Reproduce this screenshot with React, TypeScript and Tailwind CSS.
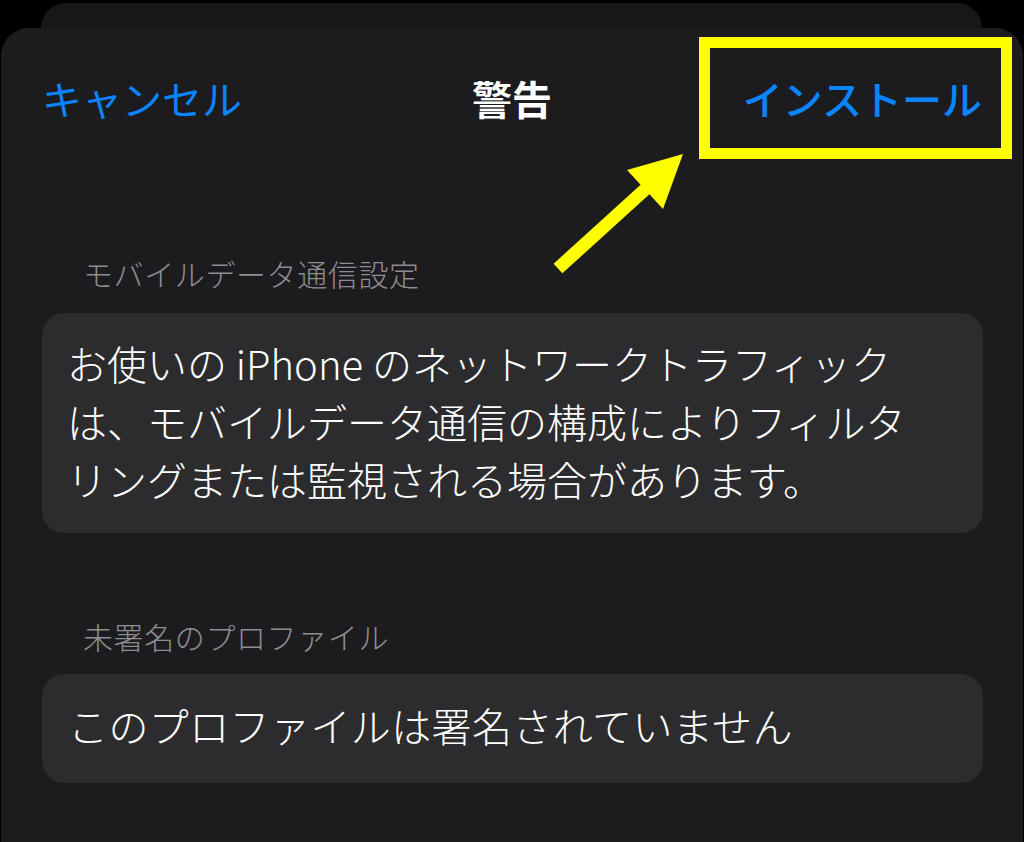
import React from "react";

const FONT = { fontFamily: '"Noto Sans CJK JP", "Noto Sans", sans-serif' };

export default function App() {
  return (
    <div
      className="relative w-[1024px] h-[842px] overflow-hidden bg-black flex flex-col"
      style={FONT}
    >
      {/* back sheet */}
      <div className="mt-[3px] ml-[41px] mr-[42px] h-[25px] shrink-0 rounded-t-[25px] bg-[#171719]" />
      {/* front sheet */}
      <div className="mx-[1px] flex-1 rounded-t-[28px] bg-[#1c1c1e] flex flex-col">
        {/* header */}
        <div className="mt-[46px] px-[41px] grid grid-cols-[1fr_auto_1fr] items-center h-[48px]">
          <div className="text-[40px] leading-[48px] text-[#0a84ff] justify-self-start">キャンセル</div>
          <div className="text-[40px] leading-[48px] text-white font-bold">警告</div>
          <div className="text-[40px] leading-[48px] text-[#0a84ff] font-medium justify-self-end">インストール</div>
        </div>

        {/* section 1 */}
        <div className="mt-[133px] pl-[82px] text-[30px] leading-[36px] tracking-[0.6px] text-[#8d8d93] font-light">
          モバイルデータ通信設定
        </div>
        <div className="mt-[22px] ml-[41px] mr-[40px] rounded-[22px] bg-[#2c2c2e] pl-[25px] pt-[21px] pb-[25px] text-white text-[40px] leading-[58px] whitespace-nowrap font-light">
          <div>お使いの iPhone のネットワークトラフィック</div>
          <div>は、モバイルデータ通信の構成によりフィルタ</div>
          <div>リングまたは監視される場合があります。</div>
        </div>

        {/* section 2 */}
        <div className="mt-[85px] pl-[82px] text-[30px] leading-[36px] tracking-[0.6px] text-[#8d8d93] font-light">
          未署名のプロファイル
        </div>
        <div className="mt-[20px] ml-[41px] mr-[40px] rounded-[22px] bg-[#2c2c2e] pl-[26px] pt-[22px] pb-[29px] text-white text-[40px] leading-[58px] tracking-[0.4px] whitespace-nowrap font-light">
          このプロファイルは署名されていません
        </div>
      </div>

      {/* annotation: highlight box */}
      <div className="absolute left-[699px] top-[37px] w-[313px] h-[122px] border-[11px] border-[#ffff00] pointer-events-none" />
      {/* annotation: arrow */}
      <svg
        className="absolute left-0 top-0 pointer-events-none"
        width="1024"
        height="842"
        viewBox="0 0 1024 842"
      >
        <polygon
          fill="#ffff00"
          points="553.6,263.7 640.6,184.7 627,170 683,154 663,209 649.4,194.3 562.4,273.3"
        />
      </svg>
    </div>
  );
}
